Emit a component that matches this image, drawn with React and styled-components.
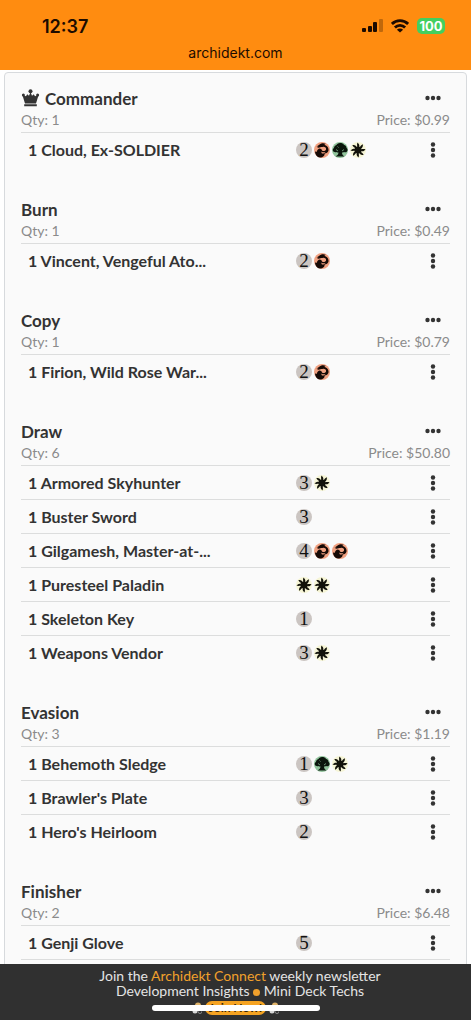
import React from "react";
import styled, { createGlobalStyle } from "styled-components";

const Global = createGlobalStyle`
  * { box-sizing: border-box; }
  body { margin: 0; background: #fff; color: #333; font-family: Lato, "Liberation Sans", sans-serif; }
`;

const Shell = styled.div`
  display: flex;
  flex-direction: column;
  height: 100vh;
  overflow: hidden;
`;

const StatusBar = styled.header`
  flex: none;
  background: #ff8c10;
  color: #1c0b00;
  font-family: Inter, "Liberation Sans", sans-serif;
  height: 70px;
  padding-top: 14px;
`;

const StatusLine = styled.div`
  display: flex;
  align-items: center;
  justify-content: space-between;
  height: 24px;
  padding: 0 26px 0 42px;
`;

const Clock = styled.time`
  font-size: 18px;
  font-weight: 600;
`;

const Indicators = styled.div`
  display: flex;
  align-items: center;
  gap: 8px;
`;

const Battery = styled.span`
  width: 28px;
  height: 16px;
  border-radius: 5px;
  background: #43cf5f;
  color: #fff;
  font-size: 13px;
  font-weight: 700;
  line-height: 16px;
  text-align: center;
`;

const Address = styled.div`
  font-size: 14px;
  line-height: 18px;
  margin-top: 6px;
  text-align: center;
`;

const Content = styled.main`
  flex: 1;
  min-height: 0;
  overflow-y: auto;
  scrollbar-width: none;
  padding: 2px 4px 0;
`;

const Deck = styled.div`
  border: 1px solid #d7dadd;
  border-radius: 4px;
  background: #fafafa;
  padding: 13px 16px 0;
`;

const Category = styled.section`
  margin-bottom: 31px;
`;

const CategoryHead = styled.div`
  display: flex;
  align-items: center;
  justify-content: space-between;
  height: 24px;
  padding-right: 8px;
`;

const CategoryName = styled.h2`
  display: flex;
  align-items: center;
  gap: 5px;
  margin: 0;
  font-size: 17px;
  font-weight: 700;
`;

const Summary = styled.div`
  display: flex;
  justify-content: space-between;
  height: 22px;
  line-height: 20px;
  font-size: 14px;
  color: #8b8b8b;
`;

const CardList = styled.ul`
  list-style: none;
  margin: 0;
  padding: 0;
`;

const CardRow = styled.li`
  display: grid;
  grid-template-columns: 1fr 128px auto;
  align-items: center;
  height: 34px;
  padding-right: 8px;
  border-top: 1px solid #dcdddd;
`;

const CardLink = styled.a`
  padding-left: 7px;
  color: inherit;
  font-size: 16px;
  font-weight: 700;
  text-decoration: none;
  white-space: nowrap;
`;

const Cost = styled.span`
  display: flex;
  gap: 2px;
`;

const Generic = styled.span`
  width: 16px;
  height: 16px;
  border-radius: 50%;
  background: #cbc5c2;
  color: #111;
  font-family: "Liberation Serif", serif;
  font-size: 19px;
  line-height: 16px;
  text-align: center;
`;

const DotsButton = styled.button`
  display: flex;
  align-items: center;
  justify-content: center;
  width: 18px;
  height: 20px;
  border: 0;
  padding: 0;
  background: none;
  color: #333;
`;

const Banner = styled.footer`
  flex: none;
  position: relative;
  height: 56px;
  overflow: hidden;
  padding-top: 4px;
  background: #303030;
  color: #e4e4e4;
  font-size: 14px;
  line-height: 15px;
  text-align: center;
`;

const Accent = styled.a`
  color: #f0a02c;
  text-decoration: none;
`;

const Bullet = styled.span`
  display: inline-block;
  width: 7px;
  height: 7px;
  border-radius: 50%;
  background: #f0a02c;
`;

const BannerLine = styled.p`
  margin: 0;
  padding-left: 9px;
`;

const JoinLine = styled.div`
  display: flex;
  align-items: center;
  justify-content: center;
  gap: 3px;
  margin-top: 3px;
`;

const JoinButton = styled.button`
  height: 14px;
  border: 0;
  border-radius: 7px;
  padding: 0 4px;
  background: #f5a322;
  color: #33240c;
  font: 700 12px/14px Lato, sans-serif;
`;

const HomeIndicator = styled.div`
  position: absolute;
  left: 50%;
  top: 41px;
  width: 168px;
  height: 6px;
  margin-left: -84px;
  border-radius: 3px;
  background: #fff;
`;

const Signal = () => (
  <svg width="21" height="14" viewBox="0 0 21 14" aria-hidden="true">
    <rect x="0" y="9" width="4" height="4" rx="1" fill="#1c0b00" />
    <rect x="6" y="7" width="4" height="6" rx="1" fill="#1c0b00" />
    <rect x="11" y="3" width="4" height="10" rx="1" fill="#1c0b00" />
    <rect x="17" y="0" width="4" height="13" rx="1" fill="#1c0b00" opacity=".28" />
  </svg>
);

const Wifi = () => (
  <svg width="18" height="14" viewBox="0 0 18 14" fill="none" stroke="#1c0b00" strokeWidth="2.8" aria-hidden="true">
    <path d="M.9 4.9a11.5 11.5 0 0 1 16.2 0" />
    <path d="M3.9 8.4a7.2 7.2 0 0 1 10.2 0" />
    <path d="M9 13.6 5.9 10.7a4.4 4.4 0 0 1 6.2 0Z" fill="#1c0b00" stroke="none" />
  </svg>
);

const Crown = () => (
  <svg width="19" height="18" viewBox="0 0 19 18" fill="#333" aria-hidden="true">
    <circle cx="9.5" cy="2.2" r="2" />
    <circle cx="2.4" cy="6" r="1.5" />
    <circle cx="16.6" cy="6" r="1.5" />
    <path d="M1.4 6 5 7.2 6.2 5.2 8 6.800 9.500 3 11 6.800 12.800 5.200 14 7.200 17.600 6 15 14.600H4ZM3.200 15.300h12.600v1.900H3.200z" />
  </svg>
);

const Dots = ({ vertical }) => (
  <svg width="16" height="16" viewBox="0 0 16 16" fill="#333" aria-hidden="true">
    <g transform={vertical ? "rotate(90 8 8)" : undefined}>
      <circle cx="2.5" cy="8" r="2.2" />
      <circle cx="8" cy="8" r="2.2" />
      <circle cx="13.5" cy="8" r="2.2" />
    </g>
  </svg>
);

const Red = () => (
  <svg width="16" height="16" viewBox="0 0 32 32" role="img" aria-label="Red">
    <circle cx="16" cy="16" r="16" fill="#f0a080" />
    <path
      fill="#160a06"
      d="M10 6c4-4 10-4 14-2-2 0-3 1-3 2 5 1 9 6 8 11-1 4-4 6-8 6 1 4-3 8-9 8C6 31 2 25 2 18c1 2 3 2 4 1 0-3 2-5 5-6 3 0 5 2 5 4 3 2 7 1 8-2 1-4-3-6-7-5-4 0-6 2-11 1 1-1 2-1 3-2-2 0-3 0-4-1 2 0 4-1 5-2Z"
    />
    <path fill="#f0a080" d="M15 19c2 2 5 2 8 1-2 3-6 4-8 2Z" />
  </svg>
);

const Green = () => (
  <svg width="16" height="16" viewBox="0 0 32 32" role="img" aria-label="Green">
    <circle cx="16" cy="16" r="16" fill="#91c49c" />
    <path
      fill="#0b160d"
      d="M16 2c4 0 7 1 8 4 3 0 5 3 5 6 2 1 3 5 1 7-2 2-4 2-6 1-1 1-3 1-4 1 0 4 2 6 5 8H7c3-2 6-4 6-8-2 0-3 0-4-1-3 1-6 0-7-2-1-3 0-5 2-6 0-3 2-5 5-6 1-2 3-4 7-4Z"
    />
    <path stroke="#91c49c" strokeWidth="1.4" fill="none" d="M8 15l4 3M24 15l-4 3M11 9l2 2" />
  </svg>
);

const White = () => (
  <svg width="16" height="16" viewBox="0 0 32 32" role="img" aria-label="White">
    <circle cx="16" cy="16" r="16" fill="#f6f5d6" />
    <g fill="#12120a">
      <circle cx="16" cy="16" r="7" />
      {[0, 45, 90, 135, 180, 225, 270, 315].map((a) => (
        <path key={a} transform={`rotate(${a} 16 16)`} d="M14.500 10.500C15 8 13 5 15 1 16.500 3 20 5 18.200 10.500Z" />
      ))}
    </g>
  </svg>
);

const Spark = () => (
  <svg width="10" height="12" viewBox="0 0 10 12" aria-hidden="true">
    <circle cx="6" cy="3.500" r="3" fill="#e0b46a" />
    <circle cx="3" cy="9" r="2.500" fill="#d8d8d8" />
    <circle cx="8" cy="9.500" r="2" fill="none" stroke="#8a8a8a" />
  </svg>
);

const symbols = { R: Red, G: Green, W: White };

const Mana = ({ code }) => {
  const Symbol = symbols[code];
  return Symbol ? <Symbol /> : <Generic>{code}</Generic>;
};

const categories = [
  { name: "Commander", icon: true, qty: 1, price: "$0.99", cards: [["Cloud, Ex-SOLDIER", "2RGW"]] },
  { name: "Burn", qty: 1, price: "$0.49", cards: [["Vincent, Vengeful Ato...", "2R"]] },
  { name: "Copy", qty: 1, price: "$0.79", cards: [["Firion, Wild Rose War...", "2R"]] },
  {
    name: "Draw",
    qty: 6,
    price: "$50.80",
    cards: [
      ["Armored Skyhunter", "3W"],
      ["Buster Sword", "3"],
      ["Gilgamesh, Master-at-...", "4RR"],
      ["Puresteel Paladin", "WW"],
      ["Skeleton Key", "1"],
      ["Weapons Vendor", "3W"],
    ],
  },
  {
    name: "Evasion",
    qty: 3,
    price: "$1.19",
    cards: [
      ["Behemoth Sledge", "1GW"],
      ["Brawler's Plate", "3"],
      ["Hero's Heirloom", "2"],
    ],
  },
  { name: "Finisher", qty: 2, price: "$6.48", cards: [["Genji Glove", "5"]], more: true },
];

export default function App() {
  return (
    <Shell>
      <Global />
      <StatusBar>
        <StatusLine>
          <Clock>12:37</Clock>
          <Indicators>
            <Signal />
            <Wifi />
            <Battery>100</Battery>
          </Indicators>
        </StatusLine>
        <Address>archidekt.com</Address>
      </StatusBar>
      <Content>
        <Deck>
          {categories.map((c) => (
            <Category key={c.name}>
              <CategoryHead>
                <CategoryName>
                  {c.icon && <Crown />}
                  {c.name}
                </CategoryName>
                <DotsButton aria-label={`${c.name} options`}>
                  <Dots />
                </DotsButton>
              </CategoryHead>
              <Summary>
                <span>Qty: {c.qty}</span>
                <span>Price: {c.price}</span>
              </Summary>
              <CardList>
                {c.cards.map(([name, cost]) => (
                  <CardRow key={name}>
                    <CardLink href="#">1 {name}</CardLink>
                    <Cost>
                      {[...cost].map((code, i) => (
                        <Mana key={i} code={code} />
                      ))}
                    </Cost>
                    <DotsButton aria-label={`${name} options`}>
                      <Dots vertical />
                    </DotsButton>
                  </CardRow>
                ))}
                {c.more && <CardRow />}
              </CardList>
            </Category>
          ))}
        </Deck>
      </Content>
      <Banner>
        <BannerLine>
          Join the <Accent href="#">Archidekt Connect</Accent> weekly newsletter
        </BannerLine>
        <BannerLine>
          Development Insights <Bullet /> Mini Deck Techs
        </BannerLine>
        <JoinLine>
          <Spark />
          <JoinButton>Join Now!</JoinButton>
          <Spark />
        </JoinLine>
        <HomeIndicator />
      </Banner>
    </Shell>
  );
}
